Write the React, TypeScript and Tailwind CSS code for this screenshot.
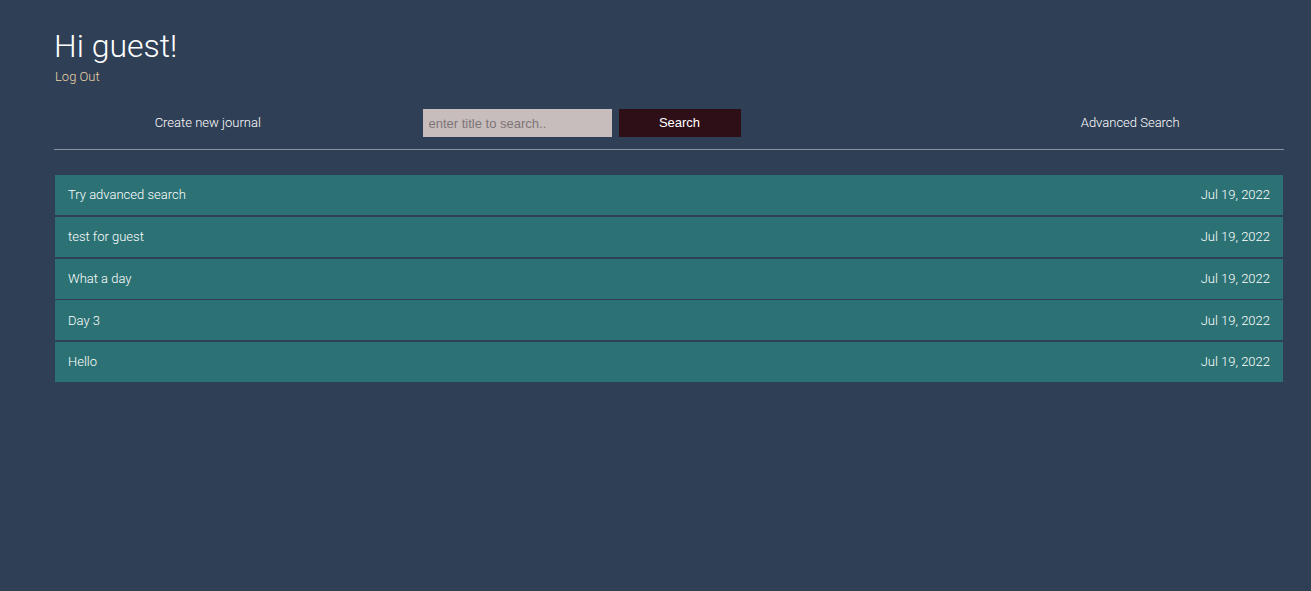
import React from "react";

const entries = [
  "Try advanced search",
  "test for guest",
  "What a day",
  "Day 3",
  "Hello",
];

export default function App() {
  return (
    <div
      className="min-h-[591px] w-full bg-[#2f3f56] text-white"
      style={{ fontFamily: "Roboto, 'Liberation Sans', sans-serif" }}
    >
      <div className="pl-[54px] pr-[27px] pt-[26px]">
        <h1 className="text-[32px] font-light leading-[40px] text-white">Hi guest!</h1>
        <div className="mt-[2px] pl-[1px] text-[13px] font-light leading-[18px] text-[#ead3a6]">Log Out</div>
        <div className="mt-[23px] grid grid-cols-4 items-center border-b border-[#8a929c] pb-[12px]">
          <div className="text-center text-[13px] font-light text-white">Create new journal</div>
          <div className="col-span-2 flex items-center gap-[7px] pl-[61px]">
            <input
              placeholder="enter title to search.."
              className="h-[28px] w-[189px] bg-[#c8bdbd] px-[6px] text-[13px] text-[#333] outline-none placeholder:text-[#7c7576]"
              style={{ fontFamily: "'Liberation Sans', Arial, sans-serif" }}
            />
            <button
              className="h-[28px] w-[122px] bg-[#2f0f17] text-[13px] text-white"
              style={{ fontFamily: "'Liberation Sans', Arial, sans-serif" }}
            >
              Search
            </button>
          </div>
          <div className="text-center text-[13px] font-light text-white">Advanced Search</div>
        </div>
        <div className="mt-[25px] flex flex-col gap-[1.75px] pl-[1px] pr-[1px]">
          {entries.map((t) => (
            <div
              key={t}
              className="flex h-[40px] items-center justify-between bg-[#2c7274] px-[13px] text-[13px] font-light text-white"
            >
              <span>{t}</span>
              <span>Jul 19, 2022</span>
            </div>
          ))}
        </div>
      </div>
    </div>
  );
}
